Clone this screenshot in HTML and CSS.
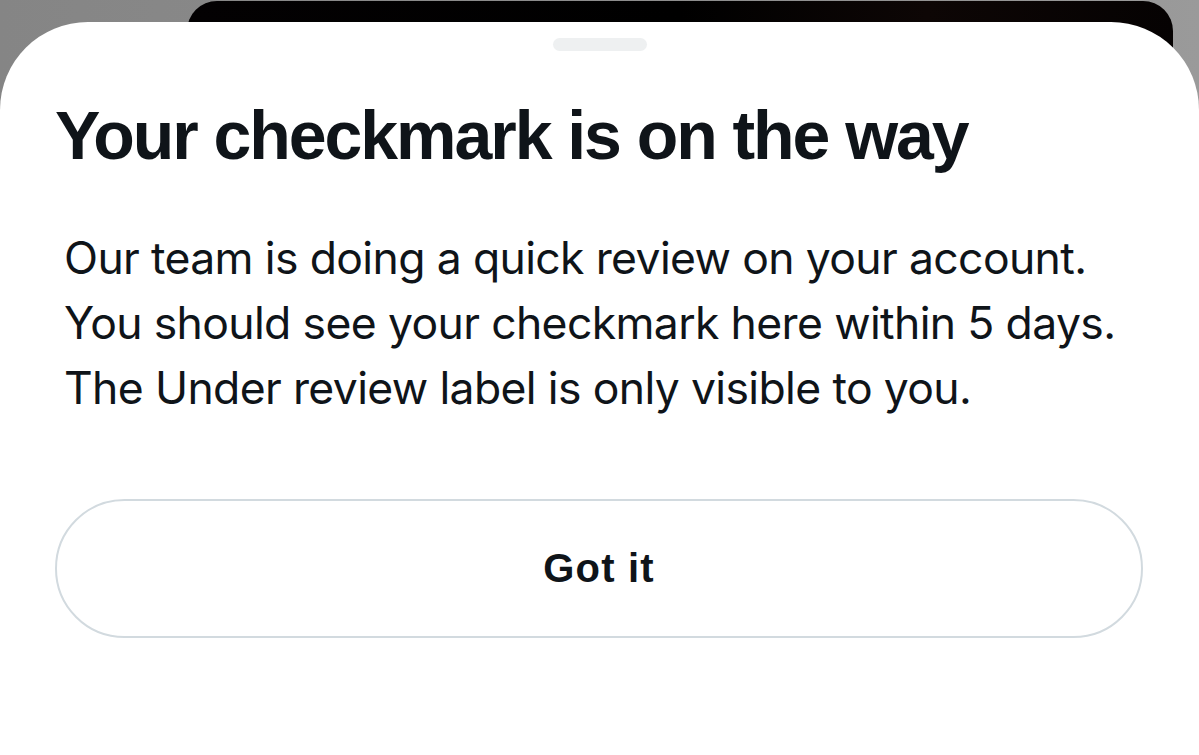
FILE: index.html
```html
<!DOCTYPE html>
<html>
<head>
<meta charset="utf-8">
<link rel="stylesheet" href="styles.css">
</head>
<body>
<div class="screen">
  <div class="peek"></div>
  <div class="sheet">
    <div class="handle"></div>
    <h1 class="title">Your checkmark is on the way</h1>
    <p class="desc">Our team is doing a quick review on your account.<br>You should see your checkmark here within 5 days.<br>The Under review label is only visible to you.</p>
    <button class="btn">Got it</button>
  </div>
</div>
</body>
</html>
```
FILE: styles.css
```css
html, body {
  margin: 0;
  padding: 0;
  height: 100%;
  overflow: hidden;
}
body {
  background: linear-gradient(90deg, #858585 0%, #8e8e8e 60%, #9a9a9a 100%);
  font-family: "Liberation Sans", Arial, sans-serif;
}
.screen {
  position: relative;
  height: 755px;
  display: flex;
  flex-direction: column;
}
.peek {
  position: absolute;
  left: 187px;
  width: 986px;
  top: 1px;
  height: 120px;
  border-radius: 30px 30px 0 0;
  background: linear-gradient(90deg, #030102 0%, #000 50%, #0d0605 75%, #050202 100%);
}
.sheet {
  position: relative;
  margin-top: 22px;
  flex: 1;
  background: #fff;
  border-radius: 88px 88px 0 0;
  display: flex;
  flex-direction: column;
  padding: 16px 55px 0 55px;
}
.handle {
  align-self: center;
  width: 94px;
  height: 13px;
  border-radius: 7px;
  background: #eef0f1;
}
.title {
  margin: 44px 0 0 0;
  font-size: 68px;
  line-height: 80px;
  font-weight: 700;
  color: #0f1419;
  letter-spacing: -2.05px;
}
.desc {
  margin: 51px 0 0 9px;
  font-family: "Inter", sans-serif;
  font-size: 44.5px;
  line-height: 65px;
  color: #0f1419;
  letter-spacing: -0.64px;
}
.btn {
  margin-top: 78px;
  height: 139px;
  width: 1088px;
  border: 2px solid #d2dadf;
  border-radius: 70px;
  background: #fff;
  font-family: "Liberation Sans", Arial, sans-serif;
  font-weight: 700;
  font-size: 40px;
  letter-spacing: 1.2px;
  color: #0f1419;
  padding: 0;
}
```
